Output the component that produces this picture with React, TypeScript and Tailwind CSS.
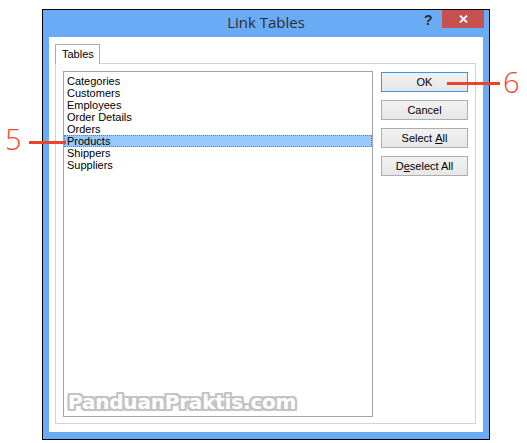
const ITEMS = ['Categories', 'Customers', 'Employees', 'Order Details', 'Orders', 'Products', 'Shippers', 'Suppliers']

function Btn({ children, primary }: { children: React.ReactNode; primary?: boolean }) {
  return (
    <div
      className={`h-[20px] w-[87px] flex items-center justify-center text-[11px] text-black border bg-gradient-to-b from-[#f2f2f2] to-[#e6e6e6] ${
        primary ? 'border-[#3c97e8]' : 'border-[#adadad]'
      }`}
    >
      {children}
    </div>
  )
}

const OUTLINE = [
  '2px 0 0 #c4c4c4', '-2px 0 0 #c4c4c4', '0 2px 0 #c4c4c4', '0 -2px 0 #c4c4c4',
  '2px 2px 0 #c4c4c4', '-2px -2px 0 #c4c4c4', '2px -2px 0 #c4c4c4', '-2px 2px 0 #c4c4c4',
  '1px 2px 0 #c4c4c4', '-1px 2px 0 #c4c4c4', '2px 1px 0 #c4c4c4', '-2px 1px 0 #c4c4c4',
  '1px -2px 0 #c4c4c4', '-1px -2px 0 #c4c4c4', '2px -1px 0 #c4c4c4', '-2px -1px 0 #c4c4c4',
  '0 0 3px #d0d0d0',
].join(', ')

export default function App() {
  return (
    <div className="relative w-[527px] h-[443px] bg-white overflow-hidden" style={{ fontFamily: '"Liberation Sans", Arial, sans-serif' }}>
      {/* dialog window */}
      <div className="ml-[42px] mt-[9px] w-[448px] h-[431px] border border-black bg-[#6aabf5] flex flex-col">
        {/* title bar */}
        <div className="relative h-[27px] flex items-center justify-center">
          <span className="text-[15px] text-[#2e2e2e] -mt-[2px]" style={{ fontFamily: '"Open Sans", sans-serif' }}>
            Link Tables
          </span>
          <span className="absolute left-[381px] top-[0px] text-[14px] font-bold text-[#2b2b2b]">?</span>
          <div className="absolute right-[5px] top-0 w-[42px] h-[18px] bg-[#c75050] flex items-center justify-center">
            <svg width="9" height="8" viewBox="0 0 9 8">
              <path d="M1 0.5 L8 7.5 M8 0.5 L1 7.5" stroke="white" strokeWidth="1.8" />
            </svg>
          </div>
        </div>

        {/* client area */}
        <div className="flex-1 mx-[6px] mb-[7px] bg-white pt-[7px] pl-[6px] pr-[7px] pb-[8px] flex flex-col">
          <div className="h-[20px] w-[45px] border border-b-0 border-[#acacac] bg-white flex items-center pl-[6px] text-[11px] text-black relative z-10 -mb-px">
            Tables
          </div>
          <div className="flex-1 border border-[#d3d3d3] pt-[7px] pl-[7px] flex gap-[8px]">
            {/* list box */}
            <div className="w-[310px] h-[346px] border border-[#a3a3a3] pt-[3px] flex flex-col">
              {ITEMS.map(item => (
                <div
                  key={item}
                  className={`h-[12px] leading-[12px] pl-[3px] text-[11px] text-black ${
                    item === 'Products' ? 'bg-[#99c9ff] outline outline-1 outline-dotted outline-[#5a7fb0] -outline-offset-1' : ''
                  }`}
                >
                  {item}
                </div>
              ))}
            </div>
            {/* buttons */}
            <div className="flex flex-col gap-[8px] pt-px">
              <Btn primary>OK</Btn>
              <Btn>Cancel</Btn>
              <Btn>
                Select <span className="underline ml-[3px]">A</span>ll
              </Btn>
              <Btn>
                D<span className="underline">e</span>select All
              </Btn>
            </div>
          </div>
        </div>
      </div>

      {/* watermark */}
      <div
        className="absolute left-[68px] top-[387px] text-[20px] font-bold text-white tracking-[-0.2px]"
        style={{ fontFamily: '"DejaVu Sans", sans-serif', textShadow: OUTLINE }}
      >
        PanduanPraktis.com
      </div>

      {/* annotation 5 */}
      <div className="absolute left-[29px] top-[141px] w-[37px] h-[3px] bg-[#e8452a]" />
      <div
        className="absolute left-[5px] top-[124px] text-[29px] font-light leading-none text-[#ee4a2c]"
        style={{ fontFamily: '"Open Sans", sans-serif' }}
      >
        5
      </div>

      {/* annotation 6 */}
      <div className="absolute left-[447px] top-[82px] w-[53px] h-[3px] bg-[#e8452a]" />
      <div
        className="absolute left-[503px] top-[67px] text-[29px] font-light leading-none text-[#ee4a2c]"
        style={{ fontFamily: '"Open Sans", sans-serif' }}
      >
        6
      </div>
    </div>
  )
}
